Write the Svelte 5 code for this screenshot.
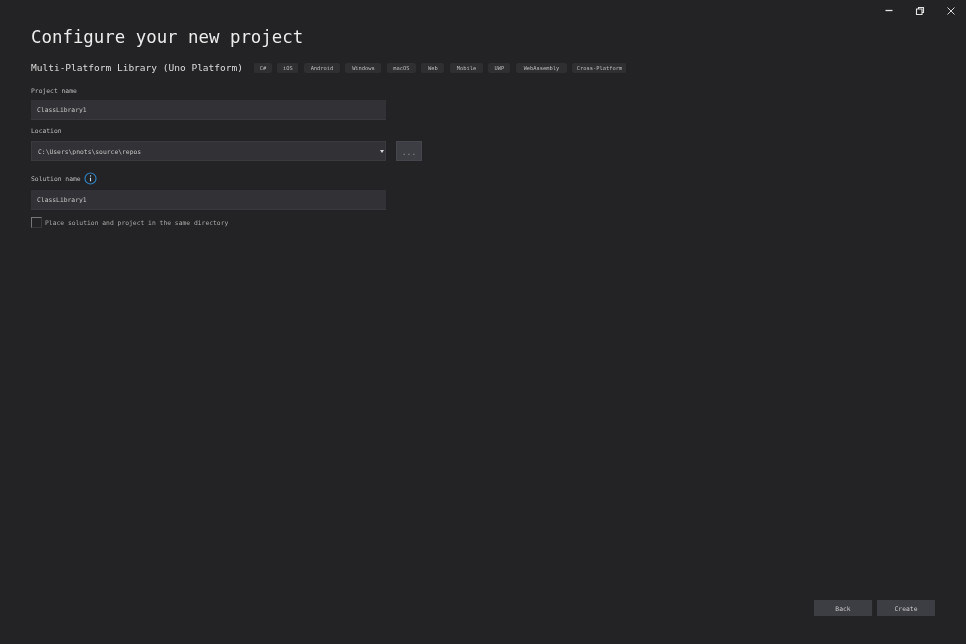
<script>
  const tags = [
    ['C#', 18], ['iOS', 21], ['Android', 36], ['Windows', 36], ['macOS', 29], ['Web', 23],
    ['Mobile', 33], ['UWP', 22], ['WebAssembly', 51], ['Cross-Platform', 54]
  ];
</script>

<div class="page">
  <div class="window-controls">
    <button class="wc" aria-label="Minimize">
      <svg width="10" height="10" viewBox="0 0 10 10"><path d="M1.500 4.500h7" stroke="#e4e4e4" stroke-width="1.300" fill="none" /></svg>
    </button>
    <button class="wc" aria-label="Restore">
      <svg width="10" height="10" viewBox="0 0 10 10"><path d="M1.500 3h5.500v5.500h-5.500z M3.500 3v-1.500h5v5h-1.500" stroke="#e4e4e4" stroke-width="1.100" fill="none" /></svg>
    </button>
    <button class="wc" aria-label="Close">
      <svg width="10" height="10" viewBox="0 0 10 10"><path d="M1.500 1.500l7 7M8.500 1.500l-7 7" stroke="#d8d8d8" stroke-width="1" fill="none" /></svg>
    </button>
  </div>

  <main class="content">
    <h1>Configure your new project</h1>

    <div class="template">
      <h2>Multi-Platform Library (Uno Platform)</h2>
      <ul class="tags">
        {#each tags as [t, w]}
          <li class="tag" style:width="{w}px">{t}</li>
        {/each}
      </ul>
    </div>

    <label class="label" for="project">Project name</label>
    <div class="input-row"><input id="project" class="input" value="ClassLibrary1" /></div>

    <label class="label loc" for="location">Location</label>
    <div class="location-row">
      <div class="combo">
        <input id="location" class="input path" value="C:\Users\pnots\source\repos" />
        <span class="caret"></span>
      </div>
      <button class="browse">...</button>
    </div>

    <div class="solution-label">
      <label class="label flat" for="solution">Solution name</label>
      <svg class="info" width="13" height="13" viewBox="0 0 13 13">
        <circle cx="6.500" cy="6.500" r="5.500" stroke="#2f7fbd" stroke-width="1.200" fill="none" />
        <path d="M6.500 5.700v3.600" stroke="#c4dcef" stroke-width="1.100" />
        <circle cx="6.500" cy="3.900" r=".7" fill="#c4dcef" />
      </svg>
    </div>
    <div class="input-row solution"><input id="solution" class="input" value="ClassLibrary1" /></div>

    <div class="check-row">
      <span class="checkbox"></span>
      <span class="check-label">Place solution and project in the same directory</span>
    </div>
  </main>

  <footer class="footer">
    <button class="btn">Back</button>
    <button class="btn">Create</button>
  </footer>
</div>

<style>
  :global(body) {
    margin: 0;
    background: #232325;
  }
  .page {
    width: 966px;
    height: 644px;
    background: #232325;
    color: #d6d6d6;
    font-family: "DejaVu Sans Mono", "Liberation Mono", monospace;
    display: flex;
    flex-direction: column;
    box-sizing: border-box;
    overflow: hidden;
  }
  .window-controls {
    display: flex;
    justify-content: flex-end;
    height: 22px;
  }
  .wc {
    width: 31px;
    height: 22px;
    padding: 0;
    border: 0;
    background: none;
    display: flex;
    align-items: center;
    justify-content: center;
  }
  .content {
    flex: 1;
    padding: 0 0 0 31px;
    display: flex;
    flex-direction: column;
    align-items: flex-start;
  }
  h1 {
    margin: 4px 0 0;
    font-size: 17.400px;
    line-height: 22px;
    font-weight: 400;
    color: #ececec;
    filter: blur(0.3px);
  }
  .template {
    display: flex;
    align-items: center;
    margin-top: 12px;
    height: 16px;
  }
  h2 {
    margin: 0;
    font-size: 9.520px;
    line-height: 16px;
    font-weight: 400;
    color: #dcdcdc;
    white-space: nowrap;
    filter: blur(0.3px);
  }
  .tags {
    display: flex;
    gap: 5.500px;
    margin: 0 0 0 11px;
    padding: 0;
    list-style: none;
  }
  .tag {
    height: 10px;
    line-height: 10px;
    background: #2f2f32;
    border-radius: 2px;
    text-align: center;
    font-size: 5.400px;
    color: #bcbcbc;
    white-space: nowrap;
    filter: blur(0.3px);
  }
  .label {
    display: block;
    margin-top: 9px;
    height: 11px;
    font-size: 6.350px;
    line-height: 11px;
    color: #bcbcbc;
    filter: blur(0.3px);
  }
  .loc {
    margin-top: 5px;
  }
  .flat {
    margin: 0;
  }
  .input-row {
    margin-top: 4px;
  }
  .input-row.solution {
    margin-top: 6px;
  }
  .input {
    display: block;
    box-sizing: border-box;
    width: 355px;
    height: 20px;
    padding: 0 6px;
    background: #323236;
    border: 0;
    border-bottom: 1px solid #3a3a3e;
    outline: 0;
    font: inherit;
    font-size: 6.350px;
    color: #c4c4c4;
    filter: blur(0.3px);
  }
  .location-row {
    display: flex;
    gap: 10px;
    margin-top: 5px;
  }
  .combo {
    position: relative;
    width: 355px;
    height: 20px;
    background: #323236;
    border: 1px solid #3a3a3e;
    box-sizing: border-box;
  }
  .input.path {
    width: 100%;
    height: 18px;
    border: 0;
    background: none;
  }
  .caret {
    position: absolute;
    right: 1.500px;
    top: 7.500px;
    border-left: 2.500px solid transparent;
    border-right: 2.500px solid transparent;
    border-top: 3px solid #d8d8d8;
  }
  .browse {
    box-sizing: border-box;
    width: 26px;
    height: 20px;
    padding: 3px 0 0;
    background: #3d3d44;
    border: 1px solid #45454c;
    color: #8e8e94;
    font: inherit;
    font-size: 8px;
    filter: blur(0.3px);
  }
  .solution-label {
    display: flex;
    align-items: center;
    gap: 3px;
    margin-top: 11px;
    height: 12px;
  }
  .info {
    display: block;
    flex: none;
  }
  .check-row {
    display: flex;
    align-items: center;
    gap: 3px;
    margin-top: 7px;
    height: 11px;
  }
  .checkbox {
    box-sizing: border-box;
    width: 11px;
    height: 11px;
    border: 1px solid #777;
    border-right-color: #38383a;
    border-bottom-color: #38383a;
  }
  .check-label {
    font-size: 6.350px;
    color: #a8a8a8;
    white-space: nowrap;
    filter: blur(0.3px);
  }
  .footer {
    display: flex;
    justify-content: flex-end;
    gap: 5px;
    padding: 0 31px 28px 0;
  }
  .btn {
    box-sizing: border-box;
    width: 58px;
    height: 16px;
    padding: 0;
    background: #3d3d44;
    border: 0;
    color: #c8c8c8;
    font: inherit;
    font-size: 6.350px;
    filter: blur(0.3px);
  }
</style>
